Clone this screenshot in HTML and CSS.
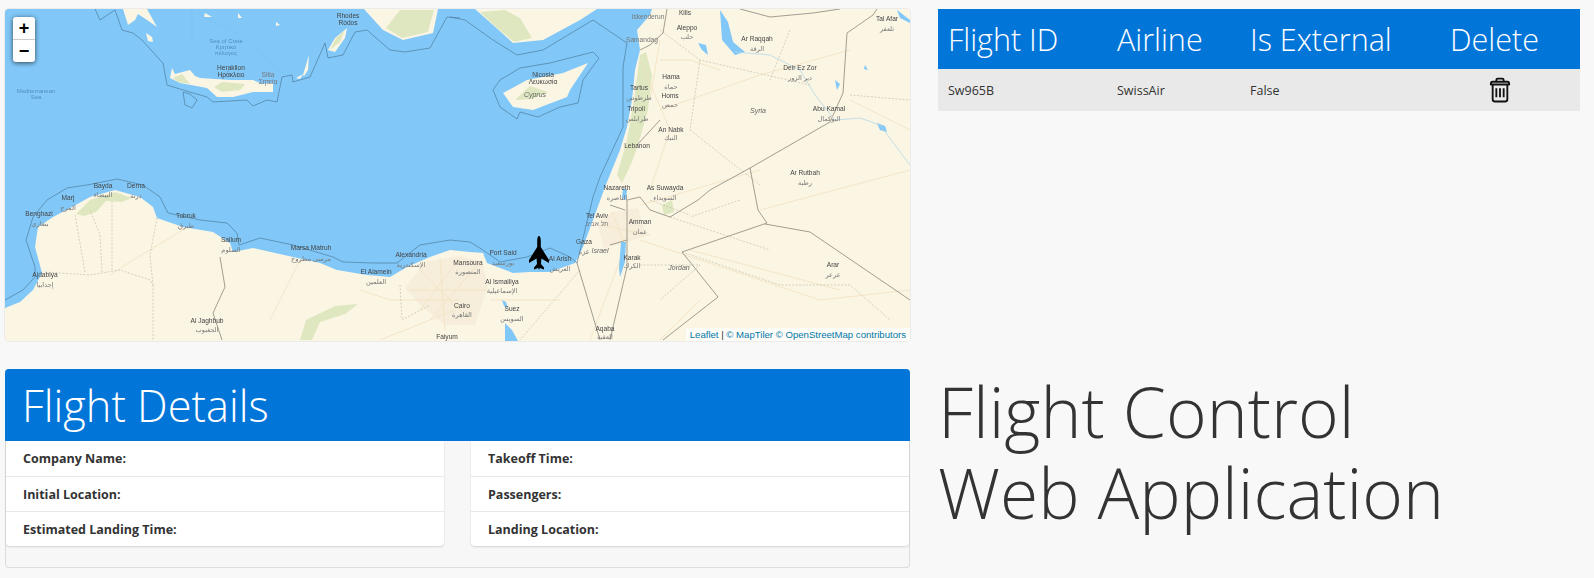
FILE: index.html
```html
<!DOCTYPE html>
<html lang="en">
<head>
  <meta charset="UTF-8" />
  <title>Flight Control Web Application</title>
  <link rel="stylesheet" href="styles.css">
</head>
<body>
<div class="page">

  <!-- Map -->
  <div class="map">
    <svg class="map-art" viewBox="5 9 905 332" preserveAspectRatio="none">
      <rect x="5" y="9" width="905" height="332" class="sea"/>
      <path class="land" d="M5 308 L20 302 33 290 42 273 35 247 38 227 53 217 72 207 90 197 115 190 140 197 153 207 157 218 183 227 213 232 230 243 233 252 253 248 293 257 320 263 337 270 367 275 390 277 407 267 430 257 450 250 470 252 483 253 487 263 513 273 530 272 550 272 575 263 583 247 593 220 605 187 620 150 627 127 632 100 635 70 640 50 637 30 650 15 652 9 910 9 910 341 5 341Z"/>
      <path class="land" d="M475 9 L493 25 513 43 543 40 580 20 597 9Z"/>
      <path class="land" d="M364 9 L383 30 403 40 433 33 438 9Z"/>
      <path class="land" d="M170 78 L172 68 175 74 190 70 195 76 200 78 230 80 253 80 262 84 273 83 273 92 253 92 233 97 217 97 207 88 180 83Z"/>
      <path class="land" d="M503 93 L527 80 563 73 588 63 570 90 567 97 533 110 513 107Z"/>
      <path class="land" d="M123 9 L128 25 135 20 138 14 147 20 157 27 147 9Z"/>
      <path class="land" d="M328 50 L335 38 347 28 345 38 335 52Z"/>
      <path class="land" d="M146 33 L152 37 153 42 148 41Z"/>
      <path class="land" d="M303 75 L309 55 308 70 304 76ZM205 13 L212 17 204 17ZM238 13 L242 18 238 18ZM276 22 L280 25 276 26ZM296 78 L303 74 300 79Z"/>

      <path class="green" d="M386 28 L402 38 428 32 434 10 400 10Z"/>
      <path class="green" d="M480 12 L497 28 514 42 532 38 520 18 505 10Z"/>
      <path class="green" d="M173 78 L182 74 190 84 178 82ZM222 82 L245 84 240 90 222 92 214 87Z"/>
      <path class="green" d="M515 100 L530 86 548 92 532 99Z"/>
      <path class="green" d="M330 50 L336 38 345 30 340 42Z"/>
      <path class="green" d="M76 214 L90 200 115 192 132 198 122 202 106 201 96 212 84 216Z"/>
      <path class="green" d="M300 340 L306 320 335 306 358 304 345 314 320 322 312 340Z"/>
      <path class="green" d="M640 55 L646 52 652 75 648 110 640 138 632 162 622 183 617 175 627 140 634 100Z"/>
      <path class="green" d="M608 228 L615 218 617 238 608 243Z"/>
      <path class="green" d="M662 205 L672 200 674 212 664 215Z"/>
      <path class="sand" d="M405 288 L425 262 460 256 482 262 488 285 475 325 445 325 420 305Z"/>
      <path class="sand" d="M598 225 L612 212 638 208 646 236 625 243 604 248Z"/>

      <path class="road" d="M183 230 L130 262 110 275 M460 300 L390 300 360 290 M455 310 L380 340 M300 260 L270 320 M490 300 L560 300 M640 205 L760 170 M660 110 L760 75 850 50 M640 240 L820 300 910 290 M850 100 L910 130 M760 210 L910 170 M690 250 L840 290 M660 60 L690 60 720 70 M700 300 L660 340 M420 270 L470 320 M440 258 L445 330 M480 262 L430 320 M410 290 L490 290 M460 258 L420 310 M600 225 L650 235 M612 212 L625 245 M640 60 L670 130 650 190 M660 40 L650 100 M620 260 L590 340"/>
      <path class="dash" d="M45 272 L90 275 120 270 150 280 153 285 M85 272 L75 215 M102 272 L100 235 90 210 M112 270 L112 200 M153 285 L153 340 M157 218 L150 255 153 285 M400 285 L402 320 430 305 M660 30 L700 60 810 85 M700 60 L690 130 M790 30 L770 80 M850 95 L910 100 M690 130 L760 185 M740 200 L690 217 M650 200 L690 215 M670 217 L770 250 M580 270 L520 340 M682 252 L780 285 850 285 890 320 M640 265 L700 265 660 300"/>
      <path class="border" d="M220 257 L225 287 213 313 222 340 M577 263 L600 340 M627 200 L640 197 650 210 670 217 698 200 710 190 750 168 830 122 843 93 847 33 873 15 877 9 M750 168 L758 210 767 223 682 252 718 297 663 340 M765 224 L810 232 910 300 M627 200 L627 267 610 340 M667 9 L663 33 650 45 640 50 M740 9 L770 17 813 13 840 9 M637 145 L660 120 M610 205 L625 210 M610 245 L627 240"/>
      <path class="maritime" d="M5 300 L23 290 35 277 35 267 26 240 33 217 47 200 67 188 87 185 117 179 143 185 160 197 168 213 200 220 227 223 237 233 239 245 260 238 293 245 333 257 343 262 373 263 397 263 420 245 450 240 470 242 483 250 500 262 527 257 550 248 570 257 577 263 593 197 600 177 623 127 623 67 627 43 593 20 543 50 517 55 493 40 465 20 450 17"/>
      <path class="maritime" d="M493 90 L500 80 520 68 550 63 593 52 599 58 583 80 578 103 560 107 538 117 520 112 517 119 500 107Z"/>
      <path class="maritime" d="M95 9 L100 20 115 10 122 30 133 33 142 40 160 60 163 63 167 85 183 90 207 97 213 102 247 100 253 106 267 100 277 102 282 77 292 75 293 82 310 77 325 43 328 58 343 55 355 32 367 30 390 50 405 52 430 48 447 17 460 18"/>
      <path class="maritime" d="M183 92 L190 94 197 100 192 108 185 105Z"/>
      <path class="province" d="M190 10 L240 35 285 75 M192 40 L192 12"/>

      <path class="sea" d="M720 10 L722 40 735 55 745 52 733 42 728 22Z"/>
      <path class="sea" d="M698 43 L706 45 708 55 702 50ZM897 10 L910 20 910 23 900 18ZM877 123 L885 126 887 132 880 130ZM621 242 L626 242 625 262 620 277 619 268ZM623 188 L627 190 626 200 622 198ZM505 323 L512 330 518 341 505 341ZM502 300 L506 302 508 308 504 306ZM835 80 L840 84 837 90ZM865 65 L868 70 864 69Z"/>
      <path class="river" d="M735 52 L770 55 800 70 815 95 835 120 860 118 880 125 895 145 910 165"/>

      <text class="lbl" x="348" y="18">Rhodes</text><text class="lbl" x="348" y="25">Ródos</text>
      <text class="lbl-sea" x="226" y="43">Sea of Crete</text><text class="lbl-sea" x="226" y="49">Κρητικό</text><text class="lbl-sea" x="226" y="55">πέλαγος</text>
      <text class="lbl" x="231" y="70">Heraklion</text><text class="lbl" x="231" y="77">Ηράκλειο</text>
      <text class="lbl-ar" x="268" y="77">Sitia</text><text class="lbl-ar" x="268" y="84">Σητεία</text>
      <text class="lbl-sea" x="36" y="93">Mediterranean</text><text class="lbl-sea" x="36" y="99">Sea</text>
      <text class="lbl" x="103" y="188">Bayda</text><text class="lbl-ar" x="103" y="197">البيضاء</text>
      <text class="lbl" x="136" y="188">Derna</text><text class="lbl-ar" x="136" y="198">درنة</text>
      <text class="lbl" x="68" y="200">Marj</text><text class="lbl-ar" x="68" y="210">المرج</text>
      <text class="lbl" x="39" y="216">Benghazi</text><text class="lbl-ar" x="40" y="226">بنغازي</text>
      <text class="lbl" x="186" y="218">Tobruk</text><text class="lbl-ar" x="186" y="228">طبرق</text>
      <text class="lbl" x="231" y="242">Sallum</text><text class="lbl-ar" x="231" y="252">السلوم</text>
      <text class="lbl" x="311" y="250">Marsa Matruh</text><text class="lbl-ar" x="311" y="261">مرسى مطروح</text>
      <text class="lbl" x="411" y="257">Alexandria</text><text class="lbl-ar" x="411" y="267">الإسكندرية</text>
      <text class="lbl" x="376" y="274">El Alamein</text><text class="lbl-ar" x="376" y="284">العلمين</text>
      <text class="lbl" x="45" y="277">Ajdabiya</text><text class="lbl-ar" x="45" y="287">إجدابيا</text>
      <text class="lbl" x="207" y="323">Al Jaghbub</text><text class="lbl-ar" x="207" y="332">الجغبوب</text>
      <text class="lbl" x="447" y="339">Faiyum</text>
      <text class="lbl" x="685" y="15">Kilis</text>
      <text class="lbl" x="687" y="30">Aleppo</text><text class="lbl-ar" x="687" y="39">حلب</text>
      <text class="lbl" x="757" y="41">Ar Raqqah</text><text class="lbl-ar" x="757" y="51">الرقة</text>
      <text class="lbl" x="887" y="21">Tal Afar</text><text class="lbl-ar" x="887" y="31">تلعفر</text>
      <text class="lbl" x="800" y="70">Deir Ez Zor</text><text class="lbl-ar" x="800" y="80">دير الزور</text>
      <text class="lbl-ar" x="648" y="19">Iskenderun</text><text class="lbl-ar" x="642" y="42">Samandag</text>
      <text class="lbl" x="671" y="79">Hama</text><text class="lbl-ar" x="671" y="89">حماة</text>
      <text class="lbl" x="639" y="90">Tartus</text><text class="lbl-ar" x="639" y="100">طرطوس</text>
      <text class="lbl" x="670" y="98">Homs</text><text class="lbl-ar" x="670" y="107">حمص</text>
      <text class="lbl" x="636" y="111">Tripoli</text><text class="lbl-ar" x="637" y="121">طرابلس</text>
      <text class="lbl-country" x="758" y="113">Syria</text>
      <text class="lbl" x="829" y="111">Abu Kamal</text><text class="lbl-ar" x="829" y="121">البوكمال</text>
      <text class="lbl" x="671" y="132">An Nabk</text><text class="lbl-ar" x="671" y="140">النبك</text>
      <text class="lbl" x="637" y="148">Lebanon</text>
      <text class="lbl" x="543" y="77">Nicosia</text><text class="lbl" x="543" y="84">Λευκωσία</text>
      <text class="lbl-country" x="535" y="97">Cyprus</text>
      <text class="lbl" x="805" y="175">Ar Rutbah</text><text class="lbl-ar" x="805" y="185">رطبة</text>
      <text class="lbl" x="617" y="190">Nazareth</text><text class="lbl-ar" x="617" y="200">الناصرة</text>
      <text class="lbl" x="665" y="190">As Suwayda</text><text class="lbl-ar" x="665" y="200">السويداء</text>
      <text class="lbl" x="597" y="218">Tel Aviv</text><text class="lbl-ar" x="597" y="226">תל אביב</text>
      <text class="lbl" x="640" y="224">Amman</text><text class="lbl-ar" x="640" y="234">عمان</text>
      <text class="lbl" x="584" y="244">Gaza</text><text class="lbl-ar" x="584" y="254">غزة</text>
      <text class="lbl-country" x="600" y="253">Israel</text>
      <text class="lbl" x="632" y="260">Karak</text><text class="lbl-ar" x="632" y="268">الكرك</text>
      <text class="lbl-country" x="679" y="270">Jordan</text>
      <text class="lbl" x="833" y="267">Arar</text><text class="lbl-ar" x="833" y="277">عرعر</text>
      <text class="lbl" x="503" y="255">Port Said</text><text class="lbl-ar" x="503" y="265">بورسعيد</text>
      <text class="lbl" x="560" y="261">Al Arish</text><text class="lbl-ar" x="560" y="271">العريش</text>
      <text class="lbl" x="468" y="265">Mansoura</text><text class="lbl-ar" x="468" y="274">المنصورة</text>
      <text class="lbl" x="502" y="284">Al Ismailiya</text><text class="lbl-ar" x="502" y="293">الإسماعيلية</text>
      <text class="lbl" x="462" y="308">Cairo</text><text class="lbl-ar" x="462" y="317">القاهرة</text>
      <text class="lbl" x="512" y="311">Suez</text><text class="lbl-ar" x="512" y="321">السويس</text>
      <text class="lbl" x="605" y="331">Aqaba</text><text class="lbl-ar" x="605" y="339">العقبة</text>
    </svg>

    <div class="zoom-control">
      <span class="zoom-btn">+</span>
      <span class="zoom-btn">−</span>
    </div>

    <svg class="plane" viewBox="0 0 22 34">
      <path d="M11 0 C12.2 0 12.8 2 12.8 5 L12.8 11 L21 24 L21 27 L13.4 22.5 L13 28 L16 31.5 L16 33.5 L11.8 32 L11 34 L10.2 32 L6 33.5 L6 31.5 L9 28 L8.6 22.5 L1 27 L1 24 L9.2 11 L9.2 5 C9.2 2 9.8 0 11 0Z"/>
    </svg>

    <div class="attribution"><a>Leaflet</a> | <a>© MapTiler</a> <a>© OpenStreetMap contributors</a></div>
  </div>

  <!-- Flights table -->
  <div class="flights">
    <table class="flights-table">
      <thead>
        <tr>
          <th class="col-id">Flight ID</th>
          <th class="col-airline">Airline</th>
          <th class="col-external">Is External</th>
          <th class="col-delete">Delete</th>
        </tr>
      </thead>
      <tbody>
        <tr>
          <td>Sw965B</td>
          <td>SwissAir</td>
          <td>False</td>
          <td class="delete-cell">
            <svg class="trash" viewBox="0 0 24 28">
              <path d="M8 5 V3 Q8 1.5 9.5 1.5 H14.5 Q16 1.5 16 3 V5 M2 7.5 Q2 5 4 5 H20 Q22 5 22 7.5 V8 H2Z M4 8 V24 Q4 26.5 6.5 26.5 H17.5 Q20 26.5 20 24 V8 M8 12 V22 M12 12 V22 M16 12 V22"/>
            </svg>
          </td>
        </tr>
      </tbody>
    </table>
  </div>

  <!-- Details -->
  <div class="card">
    <div class="card-header">Flight Details</div>
    <div class="card-lists">
      <ul class="list-group">
        <li>Company Name:</li>
        <li>Initial Location:</li>
        <li>Estimated Landing Time:</li>
      </ul>
      <ul class="list-group">
        <li>Takeoff Time:</li>
        <li>Passengers:</li>
        <li>Landing Location:</li>
      </ul>
    </div>
  </div>

  <h1 class="app-title">Flight Control<br>Web Application</h1>

</div>
</body>
</html>
```

FILE: styles.css
```css
body {
  margin: 0;
  background: #f8f8f8;
  color: #333;
  font-family: 'Open Sans', sans-serif;
  overflow: hidden;
}

.page {
  display: grid;
  grid-template-columns: 905px 642px;
  grid-template-rows: 332px auto;
  column-gap: 28px;
  row-gap: 28px;
  padding: 9px 0 0 5px;
}

/* map */
.map {
  position: relative;
  overflow: hidden;
  border-radius: 4px;
  box-shadow: 0 0 0 1px rgba(0, 0, 0, 0.05);
}

.map-art {
  display: block;
  width: 100%;
  height: 100%;
  filter: blur(0.4px);
}

.sea { fill: #81c8f8; }
.land { fill: #fbf5e4; }
.green { fill: #dfe7c0; }
.sand { fill: #f6eeda; }
.road { fill: none; stroke: #f2e1c0; stroke-width: 0.8; }
.dash { fill: none; stroke: #bdb5a3; stroke-width: 0.6; stroke-dasharray: 2 1.5; }
.border { fill: none; stroke: #8d877a; stroke-width: 0.8; }
.maritime { fill: none; stroke: #4f7c9e; stroke-width: 0.7; }
.province { fill: none; stroke: #74b2de; stroke-width: 0.5; stroke-dasharray: 1.5 1.5; }
.river { fill: none; stroke: #b4d8e6; stroke-width: 0.8; }

.lbl, .lbl-ar, .lbl-sea, .lbl-country {
  font-family: 'Liberation Sans', 'DejaVu Sans', sans-serif;
  font-size: 6.6px;
  text-anchor: middle;
}
.lbl { fill: #444; }
.lbl-ar { fill: #777; }
.lbl-sea { fill: #4f8fc0; font-size: 6px; }
.lbl-country { fill: #666; font-style: italic; font-size: 7px; }

.zoom-control {
  position: absolute;
  top: 8px;
  left: 8px;
  width: 22px;
  background: #fff;
  border-radius: 3px;
  box-shadow: 0 1px 5px rgba(0, 0, 0, 0.65);
}

.zoom-btn {
  display: block;
  height: 22px;
  line-height: 22px;
  text-align: center;
  font: bold 18px/22px 'Liberation Sans', sans-serif;
  color: #000;
}

.zoom-btn + .zoom-btn {
  border-top: 1px solid #ccc;
}

.plane {
  position: absolute;
  left: 523px;
  top: 227px;
  width: 22px;
  height: 34px;
  fill: #000;
}

.attribution {
  position: absolute;
  right: 0;
  bottom: 0;
  padding: 0 4px;
  background: rgba(255, 255, 255, 0.7);
  font: 9.6px/13px 'Liberation Sans', sans-serif;
  color: #333;
}

.attribution a {
  color: #0078a8;
}

/* flights table */
.flights-table {
  width: 642px;
  table-layout: fixed;
  border-collapse: collapse;
}

.flights-table th {
  box-sizing: border-box;
  height: 60px;
  padding: 0 10px;
  background: #0275d8;
  color: #fff;
  font-size: 30.5px;
  font-weight: 300;
  text-align: left;
}

.flights-table td {
  height: 41px;
  padding: 1px 10px 0;
  background: #e9e9e9;
  font-size: 12.5px;
}

.col-id { width: 169px; }
.col-airline { width: 133px; }
.col-external { width: 200px; }

.trash {
  display: block;
  width: 22px;
  height: 26px;
  margin: -2px 0 0 39px;
  fill: none;
  stroke: #111;
  stroke-width: 2;
  stroke-linejoin: round;
}

/* details card */
.card {
  height: 199px;
  box-sizing: border-box;
  background: #f7f7f7;
  border: 1px solid rgba(0, 0, 0, 0.1);
  border-radius: 4px;
}

.card-header {
  height: 72px;
  margin: -1px -1px 0;
  padding-left: 17px;
  background: #0275d8;
  color: #fff;
  border-radius: 4px 4px 0 0;
  font-size: 43.3px;
  font-weight: 300;
  line-height: 74px;
}

.card-lists {
  display: grid;
  grid-template-columns: 438px 438px;
  column-gap: 27px;
}

.list-group {
  margin: 0;
  padding: 0;
  list-style: none;
  background: #fff;
  border-radius: 0 0 4px 4px;
  box-shadow: 0 1px 2px rgba(0, 0, 0, 0.15);
}

.list-group li {
  height: 35px;
  box-sizing: border-box;
  padding-left: 17px;
  font-size: 12.5px;
  font-weight: 700;
  line-height: 36px;
}

.list-group li + li {
  border-top: 1px solid #e8e8e8;
}

.app-title {
  margin: 0;
  padding-top: 2px;
  font-size: 69.5px;
  font-weight: 300;
  line-height: 81px;
}
```
